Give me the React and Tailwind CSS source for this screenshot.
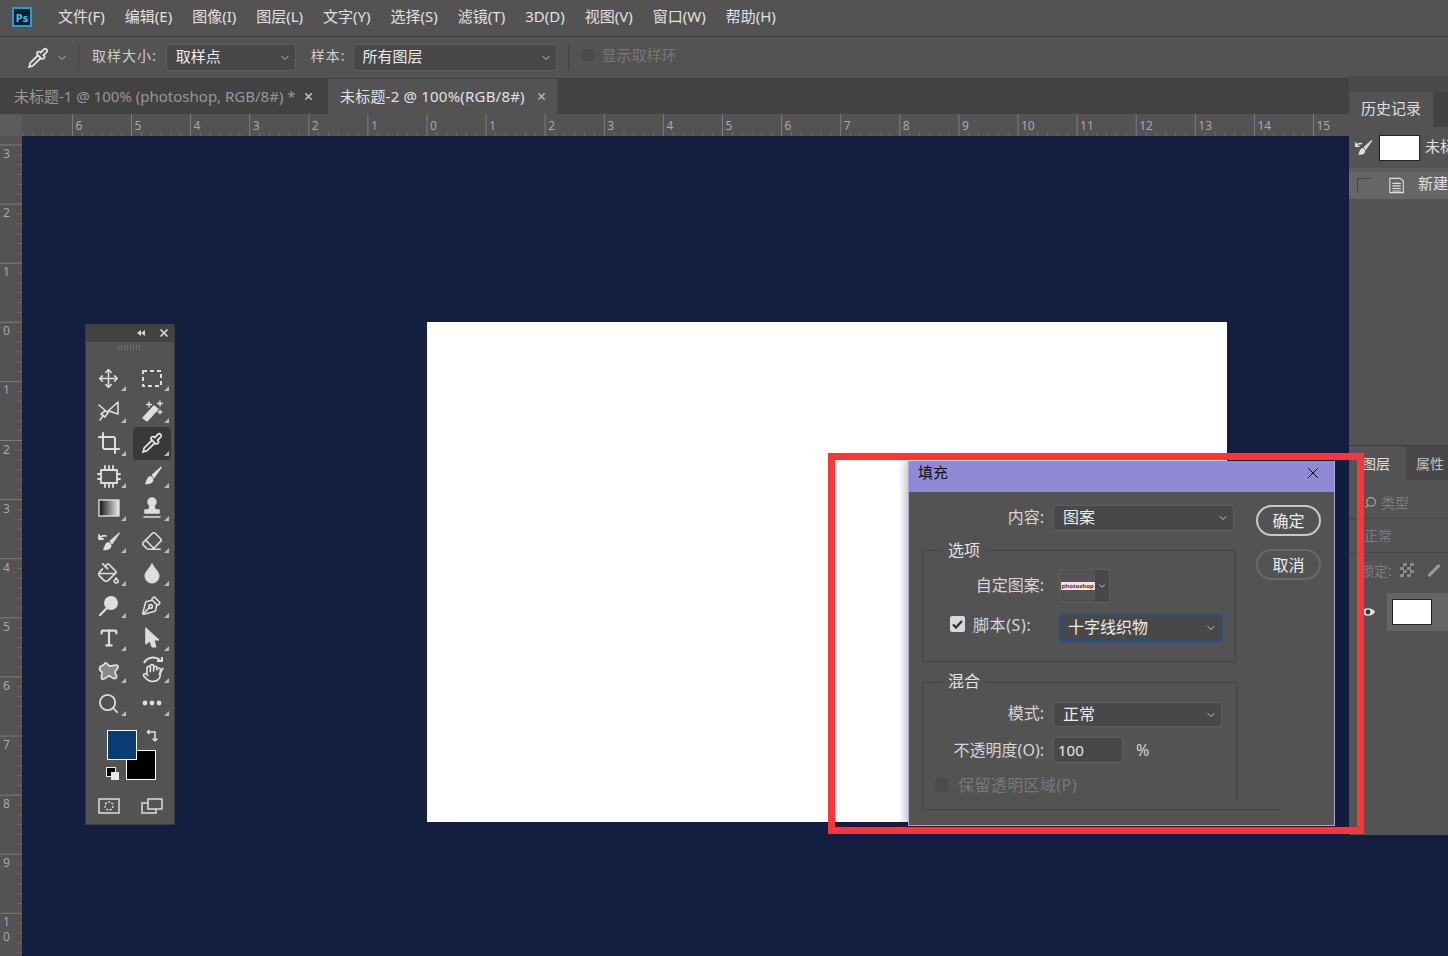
import { ChevronDown, Crop, Eraser, Hand, Move, PaintBucket, PenTool, Pipette, Search, Type, X } from 'lucide-react';

const FONT = '"Noto Sans", "Noto Sans CJK SC", sans-serif';
const menus = ['文件(F)', '编辑(E)', '图像(I)', '图层(L)', '文字(Y)', '选择(S)', '滤镜(T)', '3D(D)', '视图(V)', '窗口(W)', '帮助(H)'];
const topMarks = [6, 5, 4, 3, 2, 1, 0, 1, 2, 3, 4, 5, 6, 7, 8, 9, 10, 11, 12, 13, 14, 15];
const sideMarks = [3, 2, 1, 0, 1, 2, 3, 4, 5, 6, 7, 8, 9, 10];

function Svg({ children, size = 24, fill = 'none', sw = 2 }) {
  return (
    <svg width={size} height={size} viewBox="0 0 24 24" fill={fill} stroke="currentColor" strokeWidth={sw} strokeLinecap="round" strokeLinejoin="round">
      {children}
    </svg>
  );
}

function BrushShape() {
  return (
    <>
      <path d="M21 3 L12 11 L14 14 L21 4 Z" fill="currentColor" />
      <path d="M11 12 C7 12 7 16 5 20 C10 21 15 18 13 14 Z" fill="currentColor" stroke="none" />
    </>
  );
}

const tools = [
  { icon: <Move size={21} strokeWidth={1.8} /> },
  { icon: <Svg><rect x="3" y="5" width="18" height="15" strokeDasharray="4 3" strokeLinecap="butt" /></Svg> },
  { icon: <Svg sw={1.6}><path d="M2 6 L10 13 L21 3 V15 L12 12 L8 18 L4 15 L8 12" /><path d="M6 17 L3 21" /></Svg> },
  { icon: <Svg sw={1.4}><path d="M3 21 L14 9 L18 12 L7 24 Z" fill="currentColor" transform="translate(0 -2)" /><path d="M9 3 V8 M6.5 5.5 H11.5 M20 2 V7 M17.5 4.5 H22.5 M20 11 V15 M18 13 H22" /></Svg> },
  { icon: <Crop size={24} strokeWidth={2} /> },
  { icon: <Pipette size={22} strokeWidth={2} />, active: true },
  { icon: <Svg sw={1.8}><rect x="4" y="6" width="16" height="13" /><path d="M8 2 V6 M12 2 V6 M16 2 V6 M8 19 V23 M12 19 V23 M16 19 V23 M1 10 H4 M1 15 H4 M20 10 H23 M20 15 H23" /></Svg> },
  { icon: <Svg sw={1}><BrushShape /></Svg> },
  {
    icon: (
      <svg width="22" height="18" viewBox="0 0 22 18">
        <defs>
          <linearGradient id="grad" x1="0" x2="1" y1="0" y2="0">
            <stop offset="0" stopColor="#111" />
            <stop offset="1" stopColor="#eee" />
          </linearGradient>
        </defs>
        <rect x="1" y="1" width="20" height="16" fill="url(#grad)" stroke="#ddd" strokeWidth="1.4" />
      </svg>
    ),
  },
  { icon: <Svg sw={1.5} fill="currentColor"><circle cx="12" cy="6" r="4" /><path d="M10 10 H14 L15 14 H19 V17 H5 V14 H9 Z" /><path d="M4 21 H20" /></Svg> },
  { icon: <Svg sw={1}><g transform="translate(1 1)"><BrushShape /></g><path d="M9 7 C6 6 4 7 2 10 M2 6 V10 H6" strokeWidth="1.8" /></Svg> },
  { icon: <Eraser size={22} strokeWidth={1.8} /> },
  { icon: <PaintBucket size={23} strokeWidth={1.8} /> },
  { icon: <Svg fill="currentColor" sw={1}><path d="M12 3 C9 8 5 11 5 15 A7 7 0 0 0 19 15 C19 11 15 8 12 3 Z" /></Svg> },
  { icon: <Svg fill="currentColor" sw={2.2}><circle cx="14" cy="9" r="7" stroke="none" /><path d="M10 14 L3 21" /></Svg> },
  { icon: <PenTool size={21} strokeWidth={1.8} className="-rotate-90" /> },
  { icon: <Type size={22} strokeWidth={2.4} /> },
  { icon: <Svg fill="currentColor" sw={1}><path d="M6 2 L19 14 H14 L16 21 H12 L10 15 L6 18 Z" /></Svg> },
  { icon: <svg width="24" height="24" viewBox="0 0 24 24" fill="#8a8a8a" stroke="currentColor" strokeWidth="1.8" strokeLinejoin="round"><path d="M8 4 C10 3 11 7 13 7 C16 7 19 5 21 7 C22 10 18 11 18 13 C18 15 21 17 19 19 C16 21 14 17 12 17 C10 17 8 21 5 20 C3 18 6 15 5 13 C3 12 2 10 3 8 C5 6 7 7 8 4 Z" /></svg> },
  { icon: <span className="relative flex"><Hand size={20} strokeWidth={2} fill="#535353" className="mt-1" /><svg className="absolute -top-1 left-0" width="22" height="22" viewBox="0 0 22 22" fill="none" stroke="currentColor" strokeWidth="2"><path d="M2 8 C5 2 13 1 18 5 M15 6 H20 V2" /><path d="M17 20 L21 13" /></svg></span> },
  { icon: <Search size={23} strokeWidth={1.9} /> },
  { icon: <Svg fill="currentColor" sw={0}><circle cx="5" cy="12" r="2.4" /><circle cx="12" cy="12" r="2.4" /><circle cx="19" cy="12" r="2.4" /></Svg> },
];

function Tool({ icon, active }) {
  return (
    <div className={`relative flex h-[32.5px] w-[38px] items-center justify-center text-[#dedede] ${active ? 'rounded-sm bg-[#393939]' : ''}`}>
      {icon}
      <svg className="absolute right-0.5 bottom-1" width="5" height="5" viewBox="0 0 5 5"><path d="M5 0 V5 H0 Z" fill="#bdbdbd" /></svg>
    </div>
  );
}

function Toolbox() {
  return (
    <div className="absolute top-[188px] left-[63px] flex h-[501px] w-[90px] flex-col rounded-t-[3px] border-x border-b border-[#3d3d3d] bg-[#535353]">
      <div className="flex h-[18px] items-center justify-end gap-[13px] bg-[#424242] pr-1 text-[#d8d8d8]">
        <svg width="8" height="6" viewBox="0 0 8 6" fill="currentColor"><path d="M4 0 V6 L0 3 Z M8 0 V6 L4 3 Z" /></svg>
        <X size={12} strokeWidth={3.5} />
      </div>
      <div className="mx-auto mt-[3px] h-[5px] w-6 bg-[repeating-linear-gradient(90deg,#6e6e6e_0,#6e6e6e_1px,transparent_1px,transparent_3px)]" />
      <div className="mt-[12px] grid grid-cols-2 justify-items-center gap-x-1 px-[3px]">
        {tools.map((t, i) => <Tool key={i} icon={t.icon} active={t.active} />)}
      </div>
      <div className="relative mt-[9px] h-[52px]">
        <div className="absolute top-[21px] left-[40px] h-[30px] w-[30px] border border-white bg-black" />
        <div className="absolute top-[1px] left-[21px] h-[30px] w-[30px] border border-white bg-[#0a3c74]" />
        <svg className="absolute top-0 left-[60px] text-[#dedede]" width="14" height="14" viewBox="0 0 14 14" fill="none" stroke="currentColor" strokeWidth="1.6"><path d="M1 3 H9 V11 M1 3 L3.5 1 M1 3 L3.5 5 M9 12 L6.5 9.5 M9 12 L11.5 9.5" /></svg>
        <div className="absolute top-[39px] left-[21px] h-[8px] w-[8px] bg-black outline outline-[#e8e8e8]" />
        <div className="absolute top-[43px] left-[25px] h-[8px] w-[8px] bg-[#e8e8e8]" />
      </div>
      <div className="mt-[13px] grid grid-cols-2 justify-items-center gap-x-1 px-[3px] text-[#dedede]">
        <div className="flex h-6 w-[38px] items-center justify-center">
          <svg width="22" height="16" viewBox="0 0 22 16" fill="none" stroke="currentColor" strokeWidth="1.5"><rect x="1" y="1" width="20" height="14" /><circle cx="11" cy="8" r="4" strokeDasharray="2 1.5" /></svg>
        </div>
        <div className="flex h-6 w-[38px] items-center justify-center">
          <svg width="22" height="16" viewBox="0 0 22 16" fill="none" stroke="currentColor" strokeWidth="1.5"><rect x="1" y="5" width="14" height="10" /><rect x="7" y="1" width="14" height="10" fill="#535353" /></svg>
        </div>
      </div>
    </div>
  );
}

function Select({ label, className = '', boxed = false }) {
  return (
    <div className={`flex items-center justify-between rounded-[2px] bg-[#484848] pr-1 text-[#ececec] ${boxed ? 'border-2 border-[#2b4f85] pl-[7px]' : 'border border-[#5e5e5e] pl-[9px]'} ${className}`}>
      <span className="pb-[2px]">{label}</span>
      <ChevronDown size={12} className="text-[#c4c4c4]" />
    </div>
  );
}

function TopRuler() {
  return (
    <svg width="1426" height="22" className="block" style={{ fontFamily: FONT }}>
      {Array.from({ length: 133 }, (_, i) => {
        const x = 405 + (i - 42) * 9.85;
        return <line key={i} x1={x} x2={x} y1={i % 6 === 0 ? 0 : 18} y2="22" stroke={i % 6 === 0 ? '#7d7d7d' : '#6c6c6c'} />;
      })}
      {topMarks.map((n, i) => (
        <text key={i} x={405 + (i - 6) * 59.1 + 3} y="16" fill="#a8a8a8" fontSize="12">{n}</text>
      ))}
    </svg>
  );
}

function SideRuler() {
  return (
    <svg width="22" height="820" className="block shrink-0" style={{ fontFamily: FONT }}>
      {Array.from({ length: 84 }, (_, i) => {
        const y = 9 + i * 9.85;
        return <line key={i} x1={i % 6 === 0 ? 0 : 17} x2="22" y1={y} y2={y} stroke={i % 6 === 0 ? '#7d7d7d' : '#6c6c6c'} />;
      })}
      {sideMarks.map((n, i) => (
        n === 10 ? (
          <text key={i} fill="#a8a8a8" fontSize="12">
            <tspan x="3" y={i * 59.1 + 9 + 13}>1</tspan>
            <tspan x="3" y={i * 59.1 + 9 + 28}>0</tspan>
          </text>
        ) : (
          <text key={i} x="3" y={i * 59.1 + 9 + 13} fill="#a8a8a8" fontSize="12">{n}</text>
        )
      ))}
    </svg>
  );
}

function FillDialog() {
  return (
    <div className="absolute top-[325px] left-[886px] h-[365px] w-[427px] border-r border-b border-l border-[#aaa6e0] bg-[#535353] text-[16px] text-[#d6d6d6] shadow-[-3px_0_8px_rgba(0,0,0,0.25)]">
      <div className="flex h-[31px] items-center justify-between bg-[#8f89d6] pr-[12px] pb-[8px] pl-[9px] text-[15px] text-[#111]">
        <span>填充</span>
        <X size={18} strokeWidth={1.3} className="text-black" />
      </div>
      <div className="relative pt-[13px] pl-[13px]">
        <div className="flex h-[26px] items-center">
          <span className="w-[122px] pb-[2px] text-right">内容:</span>
          <Select label="图案" className="ml-[9px] h-[26px] w-[181px]" />
        </div>

        <div className="relative mt-[19px] h-[112px] w-[314px] border border-[#434343]">
          <span className="absolute -top-[13px] left-[19px] bg-[#535353] px-[6px] text-[#e4e4e4]">选项</span>
          <div className="mt-[18px] flex items-center">
            <span className="w-[121px] pb-[2px] text-right">自定图案:</span>
            <div className="ml-[15px] flex h-[34px] w-[51px] rounded-[2px] border border-[#5e5e5e]">
              <div className="flex w-[36px] items-center justify-center">
                <span className="bg-[#f2e6e6] px-px text-[6px] leading-[8px] font-bold text-[#8c1020]">photoshop</span>
              </div>
              <div className="flex w-[14px] items-center justify-center bg-[#484848]"><ChevronDown size={10} /></div>
            </div>
          </div>
          <div className="mt-[10px] flex items-center">
            <span className="mb-[7px] ml-[27px] flex h-4 w-[15px] items-center justify-center rounded-[2px] bg-[#d8d8d8]">
              <svg width="11" height="9" viewBox="0 0 11 9" fill="none" stroke="#2b2b2b" strokeWidth="2.2"><path d="M1 4.5 L4 7.5 L10 1" /></svg>
            </span>
            <span className="mb-[5px] ml-2 w-[86px] tracking-[0.6px]">脚本(S):</span>
            <Select label="十字线织物" boxed className="h-[28px] w-[164px]" />
          </div>
        </div>

        <div className="relative mt-[20px] h-[128px] w-[358px] border-b border-l border-[#434343]">
          <div className="h-[118px] w-[314px] border-t border-r border-[#434343]" />
          <span className="absolute -top-[13px] left-[19px] bg-[#535353] px-[6px] text-[#e4e4e4]">混合</span>
          <div className="absolute top-[19px] left-0 flex flex-col">
            <div className="flex items-center">
              <span className="w-[121px] pb-[3px] text-right">模式:</span>
              <Select label="正常" className="ml-[9px] h-[25px] w-[169px]" />
            </div>
            <div className="mt-[9px] flex items-center">
              <span className="w-[121px] text-right whitespace-nowrap">不透明度(O):</span>
              <div className="ml-[9px] flex h-[26px] w-[70px] items-center border border-[#5e5e5e] bg-[#484848] pl-1 text-[15px] text-[#e8e8e8]">100</div>
              <span className="ml-[13px] text-[16px]">%</span>
            </div>
            <div className="mt-[10px] flex items-center text-[#787878]">
              <span className="ml-[12px] h-[14px] w-[13px] rounded-[2px] bg-[#4b4b4b]" />
              <span className="ml-[10px] tracking-[0.4px]">保留透明区域(P)</span>
            </div>
          </div>
        </div>

        <div className="absolute top-[13px] left-[347px] flex flex-col gap-[13px] text-[16px] text-[#ececec]">
          <button className="h-[31px] w-[65px] rounded-full border-2 border-[#c8c8c8]">确定</button>
          <button className="h-[31px] w-[65px] rounded-full border-2 border-[#696969]">取消</button>
        </div>
      </div>
    </div>
  );
}

function RightDock() {
  return (
    <div className="absolute top-[76px] right-0 flex h-[759px] w-[99px] flex-col overflow-hidden bg-[#535353] text-[15px] text-[#e0e0e0]">
      <div className="h-[16px] bg-[#4a4a4a]" />
      <div className="flex h-[35px]">
        <div className="flex w-[84px] items-center justify-center pb-[2px]">历史记录</div>
        <div className="flex-1 bg-[#434343]" />
      </div>
      <div className="flex h-[41px] items-center whitespace-nowrap">
        <span className="ml-[5px] flex w-[26px] text-[#dedede]"><Svg sw={1} size={20}><BrushShape /><path d="M9 7 C6 6 4 7 2 10 M2 6 V10 H6" strokeWidth="1.8" /></Svg></span>
        <span className="ml-[5px] h-[26px] w-[41px] shrink-0 border border-[#222] bg-white" />
        <span className="ml-[5px] pb-[3px]">未标题-2</span>
      </div>
      <div className="h-[4px] bg-[#5e5e5e]" />
      <div className="flex h-[27px] items-center whitespace-nowrap bg-[#666]">
        <span className="ml-[8px] h-[15px] w-[15px] border-t border-l border-[#474747]" />
        <svg className="ml-[19px] text-[#e0e0e0]" width="18" height="19" viewBox="0 0 18 19" fill="none" stroke="currentColor" strokeWidth="1.3"><path d="M1 1 H13 L17 4 V18 H1 Z M4 7 H14 M4 10 H14 M4 13 H14 M4 16 H14" /></svg>
        <span className="ml-[14px] pb-[4px]">新建</span>
      </div>
      <div className="h-[247px] border-b border-[#3c3c3c]" />
      <div className="flex h-[34px] text-[14px]">
        <div className="flex w-[57px] items-center justify-end pr-[16px]">图层</div>
        <div className="flex flex-1 items-center bg-[#484848] pl-[10px] whitespace-nowrap text-[#c0c0c0]">属性</div>
      </div>
      <div className="flex h-[39px] items-center whitespace-nowrap border-b border-[#484848] pt-[6px] pl-[15px] text-[14px] text-[#7c7c7c]">
        <Search size={13} className="scale-x-[-1] text-[#b0b0b0]" />
        <span className="ml-[4px]">类型</span>
      </div>
      <div className="flex h-[34px] items-center whitespace-nowrap border-b border-[#484848] pl-[15px] text-[14px] text-[#7c7c7c]">正常</div>
      <div className="flex h-[34px] items-center whitespace-nowrap pl-[11px] text-[14px] text-[#7c7c7c]">
        <span>锁定:</span>
        <span className="ml-[8px] h-[14px] w-[14px] bg-[conic-gradient(#8a8a8a_25%,#4a4a4a_0_50%,#8a8a8a_0_75%,#4a4a4a_0)] bg-[length:7px_7px]" />
        <span className="ml-[12px] h-[3px] w-[16px] -rotate-45 rounded-full bg-[#9a9a9a]" />
      </div>
      <div className="mt-[6px] flex h-[38px] items-center">
        <svg className="ml-[12px]" width="14" height="10" viewBox="0 0 14 10"><path d="M0 5 C3 0 11 0 14 5 C11 10 3 10 0 5 Z" fill="#e4e4e4" /><circle cx="7" cy="5" r="2.4" fill="#333" /></svg>
        <div className="ml-[12px] flex h-full flex-1 items-center bg-[#666] pl-[5px]">
          <span className="h-[26px] w-[40px] border border-[#222] bg-white" />
        </div>
      </div>
    </div>
  );
}

export default function App() {
  return (
    <div className="relative flex h-[956px] w-[1448px] flex-col overflow-hidden bg-[#141f3f]" style={{ fontFamily: FONT }}>
      {/* menu bar */}
      <div className="flex h-[37px] shrink-0 items-center border-b border-[#3e3e3e] bg-[#535353] pb-[2px] pl-3 text-[15px] text-[#e2e2e2]">
        <div className="flex h-5 w-5 items-center justify-center border-2 border-[#2b9ad6] bg-[#00202e] text-[11px] leading-none font-bold text-[#4fc3f2]">Ps</div>
        <div className="ml-[26px] flex gap-[20px] pb-[2px]">
          {menus.map((m) => <span key={m}>{m}</span>)}
        </div>
      </div>

      {/* options bar */}
      <div className="flex h-[42px] shrink-0 items-center border-b border-[#424242] bg-[#535353] text-[15px] text-[#cfcfcf]">
        <Pipette size={22} strokeWidth={2} className="ml-[27px] text-[#e0e0e0]" />
        <ChevronDown size={12} className="ml-[7px] text-[#bdbdbd]" />
        <div className="ml-[10px] h-[27px] w-px bg-[#444]" />
        <span className="ml-[13px] pb-[4px] text-[14px] tracking-[1px]">取样大小:</span>
        <Select label="取样点" className="ml-[9px] h-[27px] w-[130px]" />
        <span className="ml-[15px] pb-[4px] text-[14px] tracking-[1px]">样本:</span>
        <Select label="所有图层" className="ml-[7px] h-[27px] w-[204px]" />
        <div className="ml-[11px] h-[27px] w-px bg-[#444]" />
        <span className="mb-[6px] ml-[13px] h-3 w-3 rounded-[2px] bg-[#4b4b4b]" />
        <span className="ml-2 pb-[4px] text-[#767676]">显示取样环</span>
      </div>

      {/* tabs */}
      <div className="flex h-[35px] shrink-0 items-stretch bg-[#424242] text-[15px]">
        <div className="flex w-[328px] items-center pl-[14px] whitespace-nowrap text-[#979797]">
          <span className="w-[289px]">未标题-1 @ 100% (photoshop, RGB/8#) *</span>
          <X size={11} strokeWidth={3} className="text-[#c8c8c8]" />
        </div>
        <div className="flex w-[229px] items-center bg-[#535353] pl-3 whitespace-nowrap text-[#e2e2e2]">
          <span className="w-[196px] tracking-[0.2px]">未标题-2 @ 100%(RGB/8#)</span>
          <X size={11} strokeWidth={3} className="text-[#b8b8b8]" />
        </div>
      </div>

      {/* rulers + canvas */}
      <div className="flex h-[22px] shrink-0 bg-[#535353]">
        <div className="h-[22px] w-[22px] shrink-0 bg-[#5c5c5c]" />
        <TopRuler />
      </div>
      <div className="flex min-h-0 flex-1">
        <div className="bg-[#535353]"><SideRuler /></div>
        <div className="relative flex-1">
          <Toolbox />
          <div className="absolute top-[186px] left-[405px] h-[500px] w-[800px] bg-white" />
          <FillDialog />
        </div>
      </div>

      <RightDock />

      {/* red annotation box */}
      <div className="absolute top-[453px] left-[828px] h-[381px] w-[536px] border-[7px] border-[#fc3538]" />
    </div>
  );
}
